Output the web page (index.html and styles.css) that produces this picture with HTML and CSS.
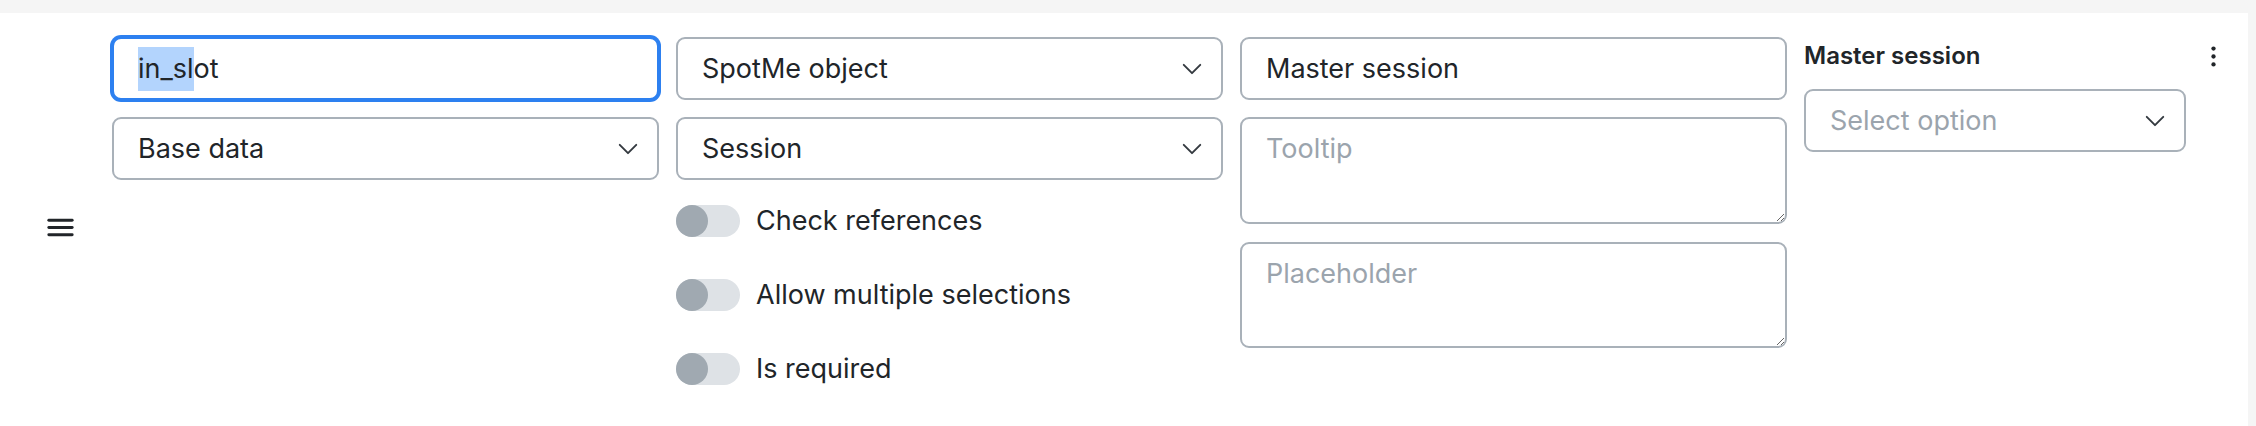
FILE: index.html
```html
<!DOCTYPE html>
<html lang="en">
<head>
<meta charset="utf-8">
<title>Field editor</title>
<link rel="stylesheet" href="styles.css">
</head>
<body>
<div class="topbar"></div>
<div class="row">
  <div class="handle">
    <svg class="handle-icon" viewBox="0 0 24 24" width="35" height="35" aria-hidden="true">
      <rect x="3" y="6" width="18" height="2" rx="1"/>
      <rect x="3" y="11" width="18" height="2" rx="1"/>
      <rect x="3" y="16" width="18" height="2" rx="1"/>
    </svg>
  </div>
  <div class="cols">
    <div class="col">
      <div class="field focused"><span class="sel">in_sl</span>ot</div>
      <div class="field select"><span>Base data</span>
        <svg class="chev" viewBox="0 0 16 16" aria-hidden="true"><path d="M2 5l6 6 6-6"/></svg>
      </div>
    </div>
    <div class="col">
      <div class="field select"><span>SpotMe object</span>
        <svg class="chev" viewBox="0 0 16 16" aria-hidden="true"><path d="M2 5l6 6 6-6"/></svg>
      </div>
      <div class="field select"><span>Session</span>
        <svg class="chev" viewBox="0 0 16 16" aria-hidden="true"><path d="M2 5l6 6 6-6"/></svg>
      </div>
      <div class="switches">
        <div class="switch"><span class="track"><span class="knob"></span></span><span class="switch-label">Check references</span></div>
        <div class="switch"><span class="track"><span class="knob"></span></span><span class="switch-label">Allow multiple selections</span></div>
        <div class="switch"><span class="track"><span class="knob"></span></span><span class="switch-label">Is required</span></div>
      </div>
    </div>
    <div class="col">
      <div class="field">Master session</div>
      <textarea class="area" placeholder="Tooltip"></textarea>
      <textarea class="area" placeholder="Placeholder"></textarea>
    </div>
    <div class="col col-last">
      <div class="label">Master session</div>
      <div class="field select placeholder"><span>Select option</span>
        <svg class="chev" viewBox="0 0 16 16" aria-hidden="true"><path d="M2 5l6 6 6-6"/></svg>
      </div>
    </div>
  </div>
  <div class="menu">
    <svg class="menu-icon" viewBox="0 0 16 16" width="23" height="23" aria-hidden="true">
      <circle cx="8" cy="2.5" r="1.5"/>
      <circle cx="8" cy="8" r="1.5"/>
      <circle cx="8" cy="13.5" r="1.5"/>
    </svg>
  </div>
</div>
</body>
</html>
```

FILE: styles.css
```css
* { box-sizing: border-box; }

html, body {
  margin: 0;
  padding: 0;
}

body {
  background: #f5f5f5;
  font-family: "Inter", "Noto Sans", sans-serif;
  color: #212529;
  font-size: 27px;
  overflow: hidden;
}

.topbar {
  height: 13px;
}

.row {
  display: flex;
  align-items: flex-start;
  background: #ffffff;
  margin-right: 8px;
  padding: 24px 0;
  height: 429px;
}

.handle {
  width: 112px;
  padding-left: 43px;
  align-self: center;
  display: flex;
}

.handle-icon {
  fill: #212529;
  display: block;
}

.cols {
  display: grid;
  grid-template-columns: 547px 547px 547px 382px;
  column-gap: 17px;
}

.col {
  display: flex;
  flex-direction: column;
  gap: 17px;
}

.col-last {
  gap: 0;
}

.field {
  height: 63px;
  border: 2px solid #a9b1b9;
  border-radius: 9px;
  padding: 0 24px;
  display: flex;
  align-items: center;
  background: #fff;
  color: #212529;
  white-space: nowrap;
}

.field.focused {
  border-color: #2d80f0;
  box-shadow: 0 0 0 2px #2d80f0;
}

.sel {
  background: #b3d4fd;
  display: inline-block;
  line-height: 44px;
}

.select {
  justify-content: space-between;
  padding-right: 18px;
}

.select.placeholder {
  color: #9ba4ad;
}

.chev {
  width: 22px;
  height: 22px;
  fill: none;
  stroke: #343a40;
  stroke-width: 1.4;
  stroke-linecap: round;
  stroke-linejoin: round;
  flex: none;
}

.switches {
  margin-top: 8px;
  display: flex;
  flex-direction: column;
  gap: 42px;
}

.switch {
  display: flex;
  align-items: center;
  height: 32px;
}

.track {
  width: 64px;
  height: 32px;
  border-radius: 16px;
  background: #dee2e6;
  display: flex;
  flex: none;
}

.knob {
  width: 32px;
  height: 32px;
  border-radius: 50%;
  background: #a0a9b1;
}

.switch-label {
  margin-left: 16px;
  line-height: 32px;
}

.area {
  display: block;
  width: 100%;
  height: 107px;
  border: 2px solid #a9b1b9;
  border-radius: 9px;
  padding: 10px 24px;
  font: inherit;
  font-size: 27px;
  line-height: 40px;
  color: #212529;
  resize: vertical;
  outline: none;
  background: #fff;
}

.area + .area {
  height: 106px;
  margin-top: 1px;
}

.area::placeholder {
  color: #9ba4ad;
}

.label {
  font-size: 24px;
  font-weight: 600;
  line-height: 28px;
  margin: 5px 0 19px;
}

.menu {
  margin-left: 16px;
  padding-top: 8px;
}

.menu-icon {
  fill: #212529;
  display: block;
}
```
